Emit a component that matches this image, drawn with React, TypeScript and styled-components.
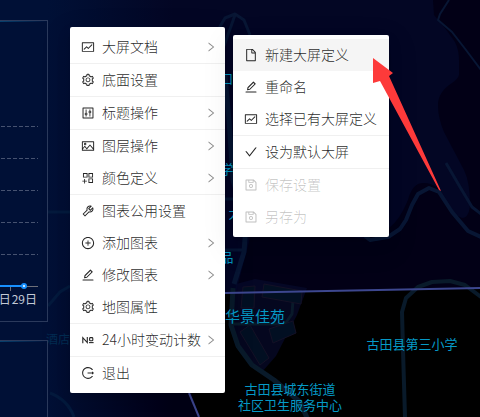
import React from 'react';
import styled, { createGlobalStyle } from 'styled-components';
import type { IconType } from 'react-icons';
import {
  AiOutlineAppstoreAdd,
  AiOutlineCheck,
  AiOutlineControl,
  AiOutlineEdit,
  AiOutlineFile,
  AiOutlineFund,
  AiOutlineLogout,
  AiOutlinePicture,
  AiOutlinePlusCircle,
  AiOutlineRight,
  AiOutlineSave,
  AiOutlineSetting,
  AiOutlineTool,
} from 'react-icons/ai';

const GlobalStyle = createGlobalStyle`
  * { box-sizing: border-box; }
  html, body, #root { height: 100%; }
  body {
    margin: 0;
    background: #000;
    font-family: "Noto Sans CJK SC", "Noto Sans", sans-serif;
    font-size: 14px;
  }
`;

const Screen = styled.main`
  position: relative;
  min-height: 100%;
  display: flex;
  overflow: hidden;
`;

const MapCanvas = styled.svg`
  position: absolute;
  inset: 0;
  width: 100%;
  height: 100%;
`;

const MapLabel = styled.span<{ $x: number; $y: number; $size?: number; $dim?: boolean }>`
  position: absolute;
  left: ${(p) => p.$x}px;
  top: ${(p) => p.$y}px;
  transform: translate(-50%, -50%);
  font-size: ${(p) => p.$size ?? 13}px;
  line-height: 16px;
  text-align: center;
  white-space: pre;
  color: ${(p) => (p.$dim ? '#032c52' : '#0599c6')};
`;

const Sidebar = styled.aside`
  position: relative;
  display: flex;
  flex-direction: column;
  gap: 18px;
  width: 48px;
  padding-top: 20px;
`;

const Panel = styled.section<{ $fill?: boolean }>`
  flex: ${(p) => (p.$fill ? '1' : 'none')};
  border: 1px solid #2b3a5c;
  border-left: 0;
  border-bottom-width: ${(p) => (p.$fill ? '0' : '1px')};
  background: linear-gradient(90deg, #06406e, #001038) top / 100% 1px no-repeat, #001036;
  padding: ${(p) => (p.$fill ? '0' : '104px 9px 14px 0')};
`;

const Chart = styled.svg`
  display: block;
  width: 100%;
  height: 166px;
`;

const AxisLabels = styled.div`
  display: flex;
  justify-content: flex-end;
  gap: 1px;
  padding-right: 1px;
  color: #c3cad6;
  font-size: 12px;
  line-height: 16px;
  white-space: nowrap;
`;

const MenuLayer = styled.div`
  position: absolute;
  left: 70px;
  top: 27px;
  display: flex;
  align-items: flex-start;
  gap: 8px;
`;

const MenuList = styled.ul<{ $nested?: boolean }>`
  list-style: none;
  margin: ${(p) => (p.$nested ? '8px' : '0')} 0 0;
  padding: 4px 0;
  background: #fff;
  border-radius: 2px;
  box-shadow:
    0 3px 6px -4px rgba(0, 0, 0, 0.12),
    0 6px 16px rgba(0, 0, 0, 0.08),
    0 9px 28px 8px rgba(0, 0, 0, 0.05);
`;

const MenuRow = styled.li<{ $divided?: boolean }>`
  border-bottom: ${(p) => (p.$divided ? '1px solid #f0f0f0' : '0')};
`;

const MenuButton = styled.button<{ $active?: boolean; $arrow?: boolean }>`
  display: flex;
  align-items: center;
  width: 100%;
  height: 32px;
  border: 0;
  padding: 0 ${(p) => (p.$arrow ? '8px' : '12px')} 0 11px;
  background: ${(p) => (p.$active ? '#f5f5f5' : 'transparent')};
  color: rgba(0, 0, 0, 0.85);
  font: 300 14px/22px "Noto Sans CJK SC", sans-serif;
  text-align: left;
  white-space: nowrap;
  cursor: pointer;

  &:hover:enabled { background: #f5f5f5; }
  &:disabled { color: rgba(0, 0, 0, 0.25); cursor: not-allowed; }
  svg { flex: none; }
`;

const Label = styled.span`
  flex: 1;
  margin-left: 7px;
  padding-bottom: 2px;
`;

const Arrow = styled(AiOutlineRight)`
  margin-left: 4px;
  color: rgba(0, 0, 0, 0.45);
`;

const Pointer = styled.svg`
  position: absolute;
  left: 373px;
  top: 58px;
  width: 70px;
  height: 134px;
  pointer-events: none;
`;

/** Numero sign: an N beside a raised, underlined ring. */
const NumeroIcon = ({ size = 14 }: { size?: number | string }) => (
  <svg width={size} height={size} viewBox="0 0 14 14" fill="none" stroke="currentColor" strokeWidth="1.1">
    <path d="M1.8 10.2V4.6L6.3 9.6V4" />
    <rect x="8.6" y="4.6" width="3.2" height="3.2" rx="0.8" />
    <path d="M8 9.6H12.6" />
  </svg>
);

type Item = {
  label: string;
  icon: IconType | typeof NumeroIcon;
  arrow?: boolean;
  divided?: boolean;
  active?: boolean;
  disabled?: boolean;
};

const mainItems: Item[] = [
  { label: '大屏文档', icon: AiOutlineFund, arrow: true, divided: true },
  { label: '底面设置', icon: AiOutlineSetting, divided: true },
  { label: '标题操作', icon: AiOutlineControl, arrow: true, divided: true },
  { label: '图层操作', icon: AiOutlinePicture, arrow: true },
  { label: '颜色定义', icon: AiOutlineAppstoreAdd, arrow: true, divided: true },
  { label: '图表公用设置', icon: AiOutlineTool },
  { label: '添加图表', icon: AiOutlinePlusCircle, arrow: true },
  { label: '修改图表', icon: AiOutlineEdit, arrow: true },
  { label: '地图属性', icon: AiOutlineSetting, divided: true },
  { label: '24小时变动计数', icon: NumeroIcon, arrow: true, divided: true },
  { label: '退出', icon: AiOutlineLogout },
];

const documentItems: Item[] = [
  { label: '新建大屏定义', icon: AiOutlineFile, active: true },
  { label: '重命名', icon: AiOutlineEdit },
  { label: '选择已有大屏定义', icon: AiOutlineFund, divided: true },
  { label: '设为默认大屏', icon: AiOutlineCheck, divided: true },
  { label: '保存设置', icon: AiOutlineSave, disabled: true },
  { label: '另存为', icon: AiOutlineSave, disabled: true },
];

const Menu = ({ items, nested }: { items: Item[]; nested?: boolean }) => (
  <MenuList role="menu" $nested={nested}>
    {items.map(({ label, icon: Icon, arrow, divided, active, disabled }) => (
      <MenuRow key={label} role="none" $divided={divided}>
        <MenuButton
          type="button"
          role="menuitem"
          aria-haspopup={arrow ? 'menu' : undefined}
          disabled={disabled}
          $active={active}
          $arrow={arrow}
        >
          <Icon size={14} />
          <Label>{label}</Label>
          {arrow && <Arrow size={12} />}
        </MenuButton>
      </MenuRow>
    ))}
  </MenuList>
);

const CityMap = () => (
  <MapCanvas viewBox="0 0 480 417" preserveAspectRatio="xMinYMin slice" aria-hidden="true">
    <defs>
      <linearGradient id="shade" x1="0" x2="1">
        <stop offset="0" stopColor="#001036" />
        <stop offset="0.1" stopColor="#001036" />
        <stop offset="0.36" stopColor="#001036" stopOpacity="0" />
      </linearGradient>
    </defs>
    <rect width="480" height="417" fill="#020016" />
    <path
      fill="#030624"
      d="M0 0H433L434 15L445 28L455 42Q459 50 459 60V75Q458 79 452 83Q438 92 438 105Q438 118 444 132L464 170Q470 182 470 205Q469 218 462 218Q455 216 448 205L438 188Q428 181 418 184Q411 188 408 200Q400 220 389 228L365 239L225 220L0 240Z"
    />
    <path fill="#030624" d="M225 200L250 238L236 292H0V200Z" />
    <path fill="#000" d="M480 289L225 293H160L199 417H480Z" />
    <path fill="#070a2c" fillOpacity=".7" d="M236 284L255 279L307 288L297 315L276 356L262 372L240 352L230 325Z" />
    <g fill="none" stroke="#081634" strokeWidth="3" strokeLinejoin="round">
      <path d="M449 0L440 14L438 20L452 32L466 50L481 70" strokeWidth="2" />
      <path d="M446 163L460 187L472 207L481 214" strokeWidth="3" />
      <path d="M365 236L370 240L388 237L400 229L406 220L412 205L418 194L429 188L439 192L452 212L468 231L481 237" strokeWidth="4" />
      <path d="M218 30L225 18L235 14L244 20L250 35M235 15L224 46" />
      <path d="M225 75L229 120L233 180L246 225L244 252L234 284" strokeWidth="5" />
      <path d="M225 199H240M225 250H244" />
    </g>
    <g fill="none" stroke="#091a2a" strokeWidth="4" strokeLinejoin="round">
      <path d="M233 288L231 325L238 346L252 365L274 380L300 402L308 420" strokeWidth="5" />
      <path d="M232 324H285L292 314L293 300" strokeWidth="3" />
      <path d="M405 417L403 350L402 312L406 298L418 287L432 282L450 281L465 285L481 297" />
    </g>
    <g fill="#020f22" stroke="#141126">
      <path d="M264 284L302 291L301 304L262 297Z" />
      <path d="M243 287L255 286L254 308L241 308Z" />
      <path d="M240 332L250 325L269 358L260 365Z" />
      <path d="M269 329L293 321L296 333L273 343Z" />
    </g>
    <g fill="none" stroke="#3d478f" strokeWidth="2">
      <path d="M160 294L225 293L480 288" />
      <path d="M189 393L199 417" />
    </g>
    <rect width="480" height="417" fill="url(#shade)" />
    <g fill="none" stroke="#041a3d" strokeWidth="3">
      <path d="M48 212H70M48 306L60 292L70 286M50 393Q68 400 74 417" />
    </g>
  </MapCanvas>
);

const gridLines = [1, 33, 65, 97, 129];

export default function App() {
  return (
    <Screen>
      <GlobalStyle />
      <CityMap />
      <MapLabel $x={227} $y={79} $size={12}>口</MapLabel>
      <MapLabel $x={227} $y={169}>学</MapLabel>
      <MapLabel $x={235} $y={213}>大</MapLabel>
      <MapLabel $x={227} $y={257}>品</MapLabel>
      <MapLabel $x={255} $y={316} $size={15}>华景佳苑</MapLabel>
      <MapLabel $x={412} $y={344}>古田县第三小学</MapLabel>
      <MapLabel $x={290} $y={397}>{'古田县城东街道\n社区卫生服务中心'}</MapLabel>
      <MapLabel $x={58} $y={339} $size={12} $dim>酒店</MapLabel>

      <Sidebar>
        <Panel>
          <Chart viewBox="0 0 38 166" preserveAspectRatio="xMaxYMin meet" aria-hidden="true">
            <g stroke="#465270" strokeDasharray="4 2">
              {gridLines.map((y) => (
                <path key={y} d={`M1 ${y + 0.5}H38`} />
              ))}
            </g>
            <path d="M24 161.5H38M10.5 162V166" stroke="#6e7079" />
            <path d="M0 161H24" stroke="#1890ff" strokeWidth="2" />
            <circle cx="24" cy="161" r="2" fill="#fff" stroke="#1890ff" strokeWidth="2" />
          </Chart>
          <AxisLabels>
            <span>日</span>
            <span>29日</span>
          </AxisLabels>
        </Panel>
        <Panel $fill />
      </Sidebar>

      <MenuLayer>
        <Menu items={mainItems} />
        <Menu items={documentItems} nested />
      </MenuLayer>

      <Pointer viewBox="0 0 70 134" aria-hidden="true">
        <path fill="#fd3a3a" d="M0 0L20 15L16 18L68 133L66 132L7 23L0 25Z" />
      </Pointer>
    </Screen>
  );
}
